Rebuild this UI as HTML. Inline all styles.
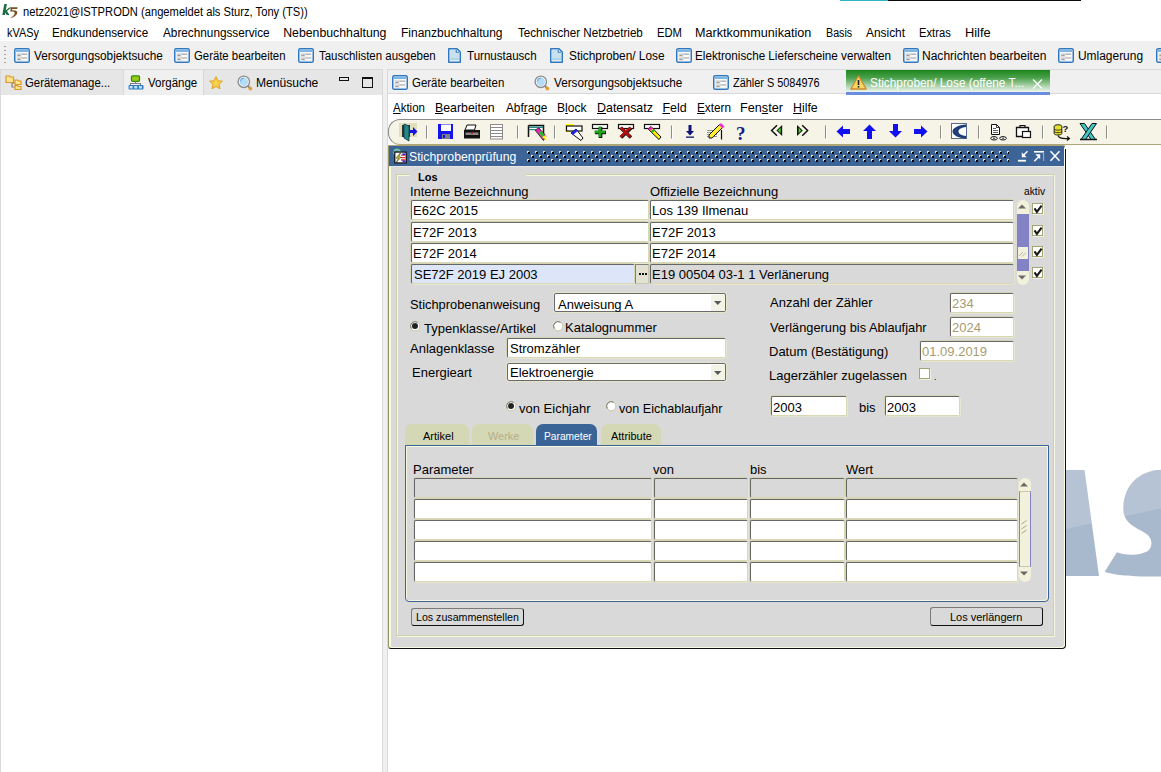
<!DOCTYPE html>
<html><head><meta charset="utf-8"><title>kVASy</title>
<style>
html,body{margin:0;padding:0;}
body{width:1161px;height:772px;overflow:hidden;position:relative;background:#fff;font-family:"Liberation Sans",sans-serif;}
.a{position:absolute;box-sizing:border-box;}
.t{position:absolute;white-space:pre;font-family:"Liberation Sans",sans-serif;}
svg{position:absolute;overflow:visible;}
.fld{position:absolute;box-sizing:border-box;background:#fff;border-top:1px solid #666;border-left:1px solid #666;border-right:1.5px solid #d8d8b4;border-bottom:1.5px solid #d8d8b4;box-shadow:-1px -1px 0 #d4d4b4, 1px 1px 0 #e6e6d2;border-radius:2px;}
.fld.g{background:#d9d9d9;}
.chk{position:absolute;box-sizing:border-box;width:11px;height:11px;background:#fff;border:1px solid #a4a474;box-shadow:1px 1px 0 #f0f0e6;}
.btn{position:absolute;box-sizing:border-box;background:#d9d9d9;border-top:1px solid #7a7a7a;border-left:1px solid #7a7a7a;border-right:1.5px solid #111;border-bottom:1.5px solid #111;border-radius:3px;}
.tab{position:absolute;box-sizing:border-box;background:#d5d8b5;border-radius:7px 7px 0 0;}
.dd{position:absolute;box-sizing:border-box;background:#fff;border:1px solid #6a6a6a;border-radius:2px;box-shadow:0 0 0 1px #e4e4c8;}
.ddb{position:absolute;right:0;top:1px;bottom:0;width:14px;background:#f4f4e6;}

</style></head><body>
<!-- top line -->
<div class="a" style="left:840px;top:0;width:48px;height:1px;background:#31b3c3"></div>
<div class="a" style="left:888px;top:0;width:193px;height:1px;background:#0a0a0a"></div>
<!-- k5 logo -->
<svg style="left:0;top:0" width="20" height="20">
 <path d="M4.3 4 H6.9 L4.9 15 H2.3 Z" fill="#1a6e42"/>
 <path d="M4.8 11 L9.4 7.6 H11.6 L7 11.1 L9.4 15 H6.8 L5 12.4 Z" fill="#1a6e42"/>
 <path d="M10.8 7.3 H17.6 L17.1 9 H12.4 L11.9 10.4 C14.8 10 17.6 10.6 17.2 13 C16.8 15.6 13.4 17.4 10.2 18.3 C12.6 16.6 14.6 15 14.6 13.2 C14.6 11.6 12.6 11.4 10.3 11.8 Z" fill="#7a5020"/>
</svg>

<!-- eclipse toolbar -->
<div class="a" style="left:0;top:41px;width:1161px;height:28px;background:#f0f0f0"></div>
<div class="a" style="left:4px;top:46px;width:2px;height:18px;background:repeating-linear-gradient(#a0a0a0 0 1px,transparent 1px 4px)"></div>

<!-- left panel -->
<div class="a" style="left:0;top:69px;width:383px;height:703px;background:#fff;border:1px solid #d9d9d9;border-bottom:none"></div>
<div class="a" style="left:0;top:69px;width:383px;height:26px;background:#e6e6e6;border:1px solid #d9d9d9;border-bottom:none"></div>
<div class="a" style="left:123px;top:70px;width:81px;height:25px;background:#f0f0f0;border-left:1px solid #d9d9d9;border-right:1px solid #d9d9d9"></div>
<!-- gap -->
<div class="a" style="left:383px;top:69px;width:4px;height:703px;background:#f0f0f0"></div>
<!-- right panel -->
<div class="a" style="left:387px;top:69px;width:774px;height:703px;background:#fff;border-left:1px solid #d9d9d9;border-top:1px solid #d9d9d9"></div>
<div class="a" style="left:388px;top:70px;width:773px;height:24px;background:#f0f0f0;border-bottom:1px solid #d9d9d9"></div>
<!-- green tab -->
<div class="a" style="left:846px;top:70px;width:204px;height:22px;background:linear-gradient(#1c871c 0%,#4aa04a 35%,#a8d0a8 70%,#eef6ee 100%)"></div>
<div class="a" style="left:846px;top:92px;width:204px;height:3px;background:#6b8de0"></div>

<!-- minimize / maximize -->
<div class="a" style="left:339px;top:77px;width:10px;height:4px;border:1px solid #111;border-top-width:1.5px"></div>
<div class="a" style="left:362px;top:77px;width:11px;height:11px;border:1px solid #111;border-top-width:2px"></div>

<!-- oracle toolbar -->
<div class="a" style="left:388px;top:119px;width:773px;height:26px;background:#f5f4e6;border-top:1px solid #8a8a8a;border-bottom:1px solid #aea676;border-radius:12px 0 0 12px;border-left:1px solid #8a8a8a"></div>

<!-- background logo -->
<svg style="left:0;top:0" width="1161" height="772">
  <defs><clipPath id="cl"><rect x="1066" y="0" width="95" height="772"/></clipPath></defs>
  <g clip-path="url(#cl)">
    <path d="M1040 470 L1084.5 470 L1099 576 L1040 576 Z" fill="#a8b8cd"/>
    <path d="M1161 469.7 C1145 470 1124 480 1123.3 508 C1123 523 1135 527 1145 533 C1152 537 1153.5 545 1148.5 550.5 C1142 555.5 1125 556 1116.9 552.3 L1104.7 571.7 C1115 575.5 1130 576.6 1161 576.6 Z" fill="#a8b8cd"/>
    <path d="M1040 440 L1161 440 L1161 508.6 L1040 534.5 Z" fill="#fff" opacity="0.16"/>
  </g>
</svg>

<!-- dialog -->
<div class="a" style="left:388px;top:145px;width:678px;height:504px;background:#d9d9d9;border-left:1px solid #949466;border-top:1px solid #aea676;border-right:1.5px solid #111;border-bottom:1.5px solid #111;border-radius:0 3px 4px 3px;box-shadow:inset 2px 0 0 #fbfbe6, inset -1px -1px 0 #fbfbe6"></div>
<div class="a" style="left:389px;top:146px;width:675px;height:20px;background:#3d6496"></div>
<svg style="left:526.5px;top:151px" width="482" height="11">
  <defs><pattern id="dots" x="0" y="0" width="8" height="8" patternUnits="userSpaceOnUse">
    <rect x="0" y="0" width="2" height="2" fill="#e6e6bc"/><rect x="1" y="1" width="2" height="2" fill="#000"/>
    <rect x="4" y="4" width="2" height="2" fill="#e6e6bc"/><rect x="5" y="5" width="2" height="2" fill="#000"/>
  </pattern></defs>
  <rect x="0" y="0" width="482" height="11" fill="url(#dots)"/>
</svg>
<div class="a" style="left:389px;top:166px;width:675px;height:1px;background:#e6e6e6"></div>
<!-- title buttons -->
<svg style="left:1016px;top:150px" width="48" height="14">
  <path d="M2 10.7 H10" stroke="#fff" stroke-width="1.8"/>
  <path d="M11.5 1.3 L7 5.8" stroke="#fff" stroke-width="1.5"/>
  <path d="M5.8 2.3 V7.2 H10.7 Z" fill="#fff"/>
  <path d="M18 1.8 H28" stroke="#fff" stroke-width="1.6"/>
  <path d="M27.6 2 V11" stroke="#b0aaa0" stroke-width="1.1"/>
  <path d="M18.3 11.3 L22.5 7" stroke="#fff" stroke-width="1.5"/>
  <path d="M24.2 4.3 H19.3 L24.2 9.2 Z" fill="#fff"/>
  <path d="M34.5 1.2 L43.5 10.8 M43.5 1.2 L34.5 10.8" stroke="#fff" stroke-width="1.6"/>
</svg>

<!-- group frame Los -->
<div class="a" style="left:397px;top:175px;width:658px;height:462px;border:1px solid #f6f6e2"></div>
<div class="a" style="left:396px;top:174px;width:658px;height:462px;border:1px solid #cbd1a8"></div>
<div class="a" style="left:410px;top:172px;width:115.5px;height:5px;background:#d9d9d9"></div>
<svg width="0" height="0" style="position:absolute">
<defs>
 <symbol id="ifrm" viewBox="0 0 16 15">
  <rect x="0.75" y="0.75" width="14.5" height="13.5" rx="1.6" fill="#fff" stroke="#2f78bd" stroke-width="1.5"/>
  <rect x="2" y="2.2" width="12" height="1.6" fill="#5aa3dc"/>
  <rect x="2.5" y="4.8" width="11" height="8" fill="#dedede"/>
  <rect x="3.5" y="6.8" width="3" height="1" fill="#8a8a8a"/>
  <rect x="3.5" y="10.8" width="3" height="1" fill="#8a8a8a"/>
  <rect x="7.5" y="5.8" width="5.5" height="3" fill="#fff"/><rect x="7.5" y="5.8" width="5.5" height="0.9" fill="#999"/>
  <rect x="7.5" y="9.6" width="5.5" height="3" fill="#fff"/><rect x="7.5" y="9.6" width="5.5" height="0.9" fill="#999"/>
 </symbol>
 <symbol id="idoc" viewBox="0 0 13 15">
  <path d="M0.75 0.75 H9 L12.25 4 V14.25 H0.75 Z" fill="#fff" stroke="#2f78bd" stroke-width="1.5" stroke-linejoin="round"/>
  <path d="M2 2 H8 V5 H11 V11.5 H2 Z" fill="#c9e1ee"/>
  <rect x="2" y="10" width="9" height="2.5" fill="#b4d4e6"/>
  <path d="M8.3 1.8 V4.3 H11" stroke="#2f78bd" stroke-width="1.1" fill="none"/>
 </symbol>
 <symbol id="istar" viewBox="0 0 14 14">
  <path d="M7 0.6 L8.9 4.8 L13.4 5.2 L10 8.2 L11 12.8 L7 10.4 L3 12.8 L4 8.2 L0.6 5.2 L5.1 4.8 Z" fill="#f7d04a" stroke="#e0a020" stroke-width="1" stroke-linejoin="round"/>
 </symbol>
 <symbol id="imag" viewBox="0 0 16 16">
  <path d="M10.8 10.8 L13.2 13.2" stroke="#8a8a8a" stroke-width="2.2"/>
  <circle cx="13.4" cy="13.6" r="1.9" fill="#e8a030"/>
  <circle cx="6.8" cy="6.8" r="5.7" fill="#fff" stroke="#8c8c8c" stroke-width="1.4"/>
  <circle cx="6.8" cy="6.8" r="4.3" fill="#b4dcf6"/>
  <path d="M3.5 6.5 A3.5 3.5 0 0 1 7 3" stroke="#5aa0e0" stroke-width="1" fill="none"/>
 </symbol>
 <symbol id="ifold" viewBox="0 0 17 15">
  <path d="M7 6 V12 H11 M7 8 H11" stroke="#808080" stroke-width="1.2" fill="none"/>
  <path d="M1 1 H4.5 L5.5 2 H8.5 V7.5 H1 Z" fill="#fbe590" stroke="#d9982c" stroke-width="1.2"/>
  <path d="M10 5 H12.5 L13.5 6 H16 V9.5 H10 Z" fill="#fbe590" stroke="#d9982c" stroke-width="1.2"/>
  <path d="M10 10.5 H12.5 L13.5 11.5 H16 V14.5 H10 Z" fill="#fbe590" stroke="#d9982c" stroke-width="1.2"/>
 </symbol>
 <symbol id="ivorg" viewBox="0 0 16 15">
  <rect x="3.5" y="0.8" width="8" height="5.5" rx="1" fill="#98cc18" stroke="#3a8a10" stroke-width="1.3"/>
  <path d="M7.5 6.5 V8.5 M2.5 10 V8.5 H12.5 V10" stroke="#808080" stroke-width="1.1" fill="none"/>
  <rect x="0.5" y="10" width="15" height="4.5" rx="1" fill="#2f7dc0"/>
  <rect x="1.6" y="11" width="3" height="2.5" fill="#bfe0fb"/><rect x="6.2" y="11" width="3" height="2.5" fill="#bfe0fb"/><rect x="10.9" y="11" width="3" height="2.5" fill="#bfe0fb"/>
 </symbol>
 <symbol id="iwarn" viewBox="0 0 17 15">
  <path d="M8.5 1 L16.2 14 H0.8 Z" fill="#f8d860" stroke="#d08a30" stroke-width="1.3" stroke-linejoin="round"/>
  <rect x="7.7" y="5" width="1.6" height="5" fill="#223"/><rect x="7.7" y="11" width="1.6" height="1.6" fill="#223"/>
 </symbol>
</defs>
</svg>
<!-- eclipse toolbar icons -->
<svg style="left:14px;top:48px" width="16" height="15"><use href="#ifrm"/></svg>
<svg style="left:174px;top:48px" width="16" height="15"><use href="#ifrm"/></svg>
<svg style="left:298px;top:48px" width="16" height="15"><use href="#ifrm"/></svg>
<svg style="left:448px;top:48px" width="13" height="15"><use href="#idoc"/></svg>
<svg style="left:550px;top:48px" width="13" height="15"><use href="#idoc"/></svg>
<svg style="left:676px;top:48px" width="16" height="15"><use href="#ifrm"/></svg>
<svg style="left:903px;top:48px" width="16" height="15"><use href="#ifrm"/></svg>
<svg style="left:1058px;top:48px" width="16" height="15"><use href="#ifrm"/></svg>
<svg style="left:1156px;top:48px" width="16" height="15"><use href="#ifrm"/></svg>
<!-- tab icons -->
<svg style="left:5px;top:75px" width="17" height="15"><use href="#ifold"/></svg>
<svg style="left:128px;top:75px" width="16" height="15"><use href="#ivorg"/></svg>
<svg style="left:209px;top:75.5px" width="14" height="14"><use href="#istar"/></svg>
<svg style="left:237px;top:74.5px" width="16" height="16"><use href="#imag"/></svg>
<svg style="left:392px;top:75px" width="16" height="15"><use href="#ifrm"/></svg>
<svg style="left:534px;top:75px" width="16" height="16"><use href="#imag"/></svg>
<svg style="left:713px;top:75px" width="16" height="15"><use href="#ifrm"/></svg>
<svg style="left:850px;top:75px" width="17" height="15"><use href="#iwarn"/></svg>
<svg style="left:1032px;top:79px" width="11" height="10"><path d="M1 0.5 L10 9.5 M10 0.5 L1 9.5" stroke="#fff" stroke-width="1.2"/></svg>
<!-- oracle toolbar icons -->
<svg style="left:0;top:0" width="1161" height="150">
 <g fill="none">
  <!-- separators -->
  <g stroke="#8c8c8c" stroke-width="1">
   <path d="M426.5 125.5V138.5M517.5 125.5V138.5M554.5 125.5V138.5M671.5 125.5V138.5M825.5 125.5V138.5M940.5 125.5V138.5M978.5 125.5V138.5M1042.5 125.5V138.5M1106.5 125.5V138.5"/>
  </g>
  <g stroke="#fff" stroke-width="1" opacity="0.9">
   <path d="M427.5 126V139M518.5 126V139M555.5 126V139M672.5 126V139M826.5 126V139M941.5 126V139M979.5 126V139M1043.5 126V139M1107.5 126V139"/>
  </g>
 </g>
 <!-- exit -->
 <rect x="399" y="123" width="18" height="14" fill="#d8d4a8" opacity="0.7"/>
 <path d="M402 125H410V137H402Z" fill="#333"/>
 <path d="M404 124 L409 126 V141 L404 138 Z" fill="#1e8a8a" stroke="#134" stroke-width="0.8"/>
 <path d="M410 130H413V127L417.5 131.5L413 136V133H410Z" fill="#1414e0"/>
 <!-- floppy -->
 <path d="M438 124H453V139H438Z" fill="#1515f0"/>
 <rect x="441" y="124.5" width="10" height="6.5" fill="#fff"/>
 <rect x="442" y="134" width="8" height="5" fill="#808080"/><rect x="443" y="135" width="2" height="3" fill="#1515f0"/>
 <!-- printer -->
 <path d="M467 125H476L474.5 130H465Z" fill="#fff" stroke="#111" stroke-width="1"/>
 <path d="M464 130H480V138.5H464Z" fill="#111"/>
 <rect x="465.5" y="132.5" width="13" height="2.5" fill="#888"/><rect x="471" y="132.5" width="2" height="1.2" fill="#e00"/>
 <!-- list -->
 <rect x="490.5" y="124.5" width="12" height="14.5" fill="#fff" stroke="#8a8a8a" stroke-width="1"/>
 <path d="M490.5 127.5H502.5M490.5 130.5H502.5M490.5 133.5H502.5M490.5 136.5H502.5" stroke="#8a8a8a" stroke-width="1"/>
 <!-- icon 528 -->
 <path d="M528.5 125.5H543.5V137M528.5 125.5V137" stroke="#111" stroke-width="1.5" fill="#fff"/>
 <rect x="529" y="126.5" width="14" height="1.5" fill="#2a8a8a"/><rect x="529" y="129" width="6" height="1.2" fill="#2a8a8a"/>
 <path d="M535 130L539 128L546 136L543.5 140.5Z" fill="#f020c0" stroke="#111" stroke-width="0.8"/>
 <path d="M538.5 132.5L541.5 131L544.5 135L542 137Z" fill="#20c020"/>
 <path d="M542 137L546 135L546.5 140.5Z" fill="#ff0"/>
 <!-- icon 565 -->
 <rect x="565" y="124" width="9" height="8" fill="#ffff00"/>
 <rect x="566.5" y="126" width="15.5" height="5" fill="#fff" stroke="#111" stroke-width="1.2"/>
 <path d="M571 133L576 129L583 138L581 140.5Z" fill="#fff" stroke="#111" stroke-width="1"/>
 <path d="M571 133L576 129L577.5 131L573 135Z" fill="#2020f0"/>
 <!-- plus -->
 <rect x="592.5" y="124.5" width="15" height="4" fill="#fff" stroke="#111" stroke-width="1.2"/>
 <path d="M600.5 127V138M595 132.5H606" stroke="#111" stroke-width="3.6"/>
 <path d="M600 126.5V137M594.5 132H605" stroke="#18a818" stroke-width="2.6"/>
 <!-- X -->
 <rect x="618.5" y="124.5" width="15" height="4" fill="#fff" stroke="#111" stroke-width="1.2"/>
 <path d="M621 128L631 137.5M631 128L621 137.5" stroke="#111" stroke-width="3.5"/>
 <path d="M620.5 127.5L630.5 137M630.5 127.5L620.5 137" stroke="#b01010" stroke-width="2.6"/>
 <!-- pencil -->
 <rect x="644.5" y="124.5" width="15" height="4" fill="#fff" stroke="#111" stroke-width="1.2"/>
 <path d="M648 129L651 126.5L661 137L659 139.5Z" fill="#ffee00" stroke="#111" stroke-width="1"/>
 <path d="M648 129L651 126.5L653 128.5L650 131Z" fill="#f020c0"/><path d="M650.5 131.5L653.5 129L655 130.5L652 133Z" fill="#20b020"/>
 <!-- download -->
 <path d="M688.5 125V131H686L690 135.5L694 131H691.5V125Z" fill="#12127a"/><rect x="686" y="136.5" width="8" height="1.3" fill="#12127a"/>
 <!-- pen doc -->
 <path d="M707 130.5H717M707 132.5H717M707 134.5H717M707 136.5H717" stroke="#888" stroke-width="0.9"/>
 <path d="M721.5 130V139.5" stroke="#111" stroke-width="1.2"/>
 <path d="M709 135L719.5 124.5L722.5 127.5L712 138H709Z" fill="#ffee33" stroke="#111" stroke-width="1"/>
 <path d="M719 125L721 123L724.5 126.5L722.5 128.5Z" fill="#f030d0"/>
 <!-- ? -->
 <text x="736" y="139.5" font-family="Liberation Serif" font-weight="bold" font-size="19" fill="#1a1a8a">?</text>
 <!-- << >> -->
 <path d="M777 125.3 L771.6 130.5 L777 135.7" stroke="#111" stroke-width="1.5" fill="none"/>
 <path d="M782.2 125 V136 L776.4 130.5 Z" fill="#111"/>
 <path d="M780.6 127.6 V133.4 L777.9 130.5 Z" fill="#44dd22"/>
 <path d="M802.2 125.3 L807.6 130.5 L802.2 135.7" stroke="#111" stroke-width="1.5" fill="none"/>
 <path d="M797 125 V136 L802.8 130.5 Z" fill="#111"/>
 <path d="M798.6 127.6 V133.4 L801.3 130.5 Z" fill="#44dd22"/>
 <!-- arrows -->
 <path d="M836.5 131.5L843 125.5V129H850V134H843V137.5Z" fill="#1010f0"/>
 <path d="M869.5 124.5L876 131H872V139H867V131H863Z" fill="#1010f0"/>
 <path d="M895.5 137.5L902 131H898V124H893V131H889Z" fill="#1010f0"/>
 <path d="M927.5 131.5L921 125.5V129H914V134H921V137.5Z" fill="#1010f0"/>
 <!-- C icon -->
 <rect x="951" y="123" width="16" height="16" fill="#c8c8c8"/>
 <rect x="951.5" y="123.5" width="15" height="15" fill="#fff" stroke="#5a6a8a" stroke-width="1"/>
 <path d="M966 124.5C958 125 952.5 128 952.5 131.5C952.5 135 958 138 966 138.5V136C962 135.5 958.5 134 958.5 131.5C958.5 129 962 127.5 966 127Z" fill="#1e3e78"/>
 <!-- doc glasses -->
 <path d="M991.5 124.5H996.5L999.5 127.5V134.5H991.5Z" fill="#fff" stroke="#111" stroke-width="1"/>
 <path d="M996.5 124.5V127.5H999.5" stroke="#111" stroke-width="0.8" fill="none"/>
 <path d="M993 128.5H996M993 130.5H998M993 132.5H998" stroke="#222" stroke-width="0.7"/>
 <ellipse cx="994" cy="138.3" rx="3.3" ry="1.7" fill="#fff" stroke="#111" stroke-width="1"/>
 <ellipse cx="1003" cy="138.3" rx="3.3" ry="1.7" fill="#fff" stroke="#111" stroke-width="1"/>
 <circle cx="994" cy="138.3" r="0.8" fill="#111"/><circle cx="1003" cy="138.3" r="0.8" fill="#111"/>
 <!-- clipboard -->
 <path d="M1016.5 127.5H1028.5V136.5H1016.5Z" fill="#fff" stroke="#111" stroke-width="1.3"/>
 <path d="M1020 127.5V125.5H1025V127.5" stroke="#111" stroke-width="1.2" fill="none"/>
 <rect x="1022.5" y="131.5" width="8" height="6" fill="#fff" stroke="#111" stroke-width="1.2"/>
 <!-- db -->
 <ellipse cx="1058" cy="126.5" rx="3.8" ry="1.8" fill="#e8e030" stroke="#111" stroke-width="0.9"/>
 <path d="M1054.2 126.5V133.5C1054.2 135.5 1061.8 135.5 1061.8 133.5V126.5" fill="#e8e030" stroke="#111" stroke-width="0.9"/>
 <path d="M1054.2 129C1054.2 130.5 1061.8 130.5 1061.8 129M1054.2 131.5C1054.2 133 1061.8 133 1061.8 131.5" stroke="#111" stroke-width="0.8" fill="none"/>
 <text x="1062.5" y="131.5" font-family="Liberation Sans" font-weight="bold" font-size="9.5" fill="#111">?</text>
 <path d="M1058 135.5C1059 138.5 1063 139 1069 138.5M1067 136.5L1069.5 138.5L1067 140.5" stroke="#111" stroke-width="1.1" fill="none"/>
 <!-- X excel -->
 <path d="M1080 123.5H1084.5L1095.5 139.5H1091Z" fill="#40c8c8" stroke="#111" stroke-width="1"/>
 <path d="M1096.5 123.5H1092L1081 139.5H1085.5Z" fill="#40c8c8" stroke="#111" stroke-width="1"/>
 <path d="M1080 139.5H1097" stroke="#111" stroke-width="1.5"/>
</svg>
<!-- dialog title icon -->
<svg style="left:391px;top:147px" width="17" height="18">
 <circle cx="6" cy="5.5" r="4.2" fill="#4a9a78"/>
 <path d="M3 3.5 Q6 1.5 9 3.5 M2.5 6 H9.5" stroke="#b8d8f0" stroke-width="0.8" fill="none"/>
 <rect x="3.2" y="4.5" width="12.6" height="12" fill="#111"/>
 <rect x="4.4" y="5.7" width="10.2" height="9.6" fill="#fff"/>
 <path d="M10 8.2H14.2M10 10.6H14.2M10 13H14.2" stroke="#e02828" stroke-width="1.3"/>
 <rect x="11.5" y="6.3" width="3" height="1.8" fill="#2a2ad8"/><rect x="11.5" y="13.5" width="3" height="1.6" fill="#2a2ad8"/>
 <path d="M9.3 5.8 L5 11.2 H7.6 L4.8 16 L10.2 10 H7.6 L9.8 5.8 Z" fill="#f4e400" stroke="#333" stroke-width="0.6"/>
</svg>

<div class="fld" style="left:410.5px;top:199.5px;width:238.5px;height:20.0px;background:#fff"></div><div class="fld" style="left:650px;top:199.5px;width:364px;height:20.0px;background:#fff"></div><div class="fld" style="left:410.5px;top:221.5px;width:238.5px;height:20.0px;background:#fff"></div><div class="fld" style="left:650px;top:221.5px;width:364px;height:20.0px;background:#fff"></div><div class="fld" style="left:410.5px;top:242.5px;width:238.5px;height:20.0px;background:#fff"></div><div class="fld" style="left:650px;top:242.5px;width:364px;height:20.0px;background:#fff"></div><div class="fld" style="left:410.5px;top:263.5px;width:224.0px;height:20.0px;background:#dce6f8"></div><div class="fld" style="left:650px;top:263.5px;width:364px;height:20.0px;background:#d9d9d9"></div><div class="a" style="left:635px;top:264px;width:14px;height:20px;background:#e2e2d2;border-top:1px solid #808080;border-left:1px solid #808080;border-right:1px solid #c8c8b0;border-bottom:1px solid #c8c8b0"></div><div class="a" style="left:638.5px;top:273px;width:2px;height:2px;background:#111;box-shadow:3px 0 0 #111,6px 0 0 #111"></div><div class="chk" style="left:1032px;top:203px"><svg style="left:0;top:0" width="9" height="9"><path d="M1.5 4.3 L3.9 7.9 L8.6 1.6" stroke="#1a1a1a" stroke-width="2.1" fill="none"/></svg></div><div class="a" style="left:1046px;top:213px;width:1.5px;height:1.5px;background:#e0e0a8"></div><div class="chk" style="left:1032px;top:225px"><svg style="left:0;top:0" width="9" height="9"><path d="M1.5 4.3 L3.9 7.9 L8.6 1.6" stroke="#1a1a1a" stroke-width="2.1" fill="none"/></svg></div><div class="a" style="left:1046px;top:235px;width:1.5px;height:1.5px;background:#e0e0a8"></div><div class="chk" style="left:1032px;top:246px"><svg style="left:0;top:0" width="9" height="9"><path d="M1.5 4.3 L3.9 7.9 L8.6 1.6" stroke="#1a1a1a" stroke-width="2.1" fill="none"/></svg></div><div class="a" style="left:1046px;top:256px;width:1.5px;height:1.5px;background:#e0e0a8"></div><div class="chk" style="left:1032px;top:267px"><svg style="left:0;top:0" width="9" height="9"><path d="M1.5 4.3 L3.9 7.9 L8.6 1.6" stroke="#1a1a1a" stroke-width="2.1" fill="none"/></svg></div><div class="a" style="left:1046px;top:277px;width:1.5px;height:1.5px;background:#e0e0a8"></div><div class="a" style="left:1016.5px;top:200px;width:12px;height:85px;background:#f2f2dc;border-radius:6px"></div><div class="a" style="left:1016.5px;top:213.5px;width:12.0px;height:57.5px;background:#8282c4"></div><div class="a" style="left:1017.5px;top:247px;width:10.0px;height:11.5px;background:#f2f2dc"></div><svg style="left:1018px;top:250px" width="9" height="7"><path d="M1 6 L5 2 M4 6.5 L8 2.5" stroke="#a8a890" stroke-width="0.8"/></svg><div class="a" style="left:1064.5px;top:145px;width:2.0px;height:3.5px;background:#fff"></div><svg style="left:1018px;top:204px" width="9" height="5"><path d="M0 4.5H8L4 0.5Z" fill="#6a6a6a"/></svg><svg style="left:1018px;top:274.5px" width="9" height="5"><path d="M0 0.5H8L4 4.5Z" fill="#6a6a6a"/></svg><div class="dd" style="left:554px;top:293px;width:172px;height:19px"><div class="ddb"></div><svg style="right:3px;top:7px" width="8" height="5"><path d="M0 0H7.5L3.75 4Z" fill="#585858"/></svg></div><div class="fld" style="left:506.5px;top:337.5px;width:219.5px;height:20.0px;background:#fff"></div><div class="dd" style="left:507px;top:362.5px;width:219px;height:18.5px"><div class="ddb"></div><svg style="right:3px;top:7px" width="8" height="5"><path d="M0 0H7.5L3.75 4Z" fill="#585858"/></svg></div><div class="fld" style="left:949.5px;top:292.5px;width:64.5px;height:20.0px;background:#fff"></div><div class="fld" style="left:949.5px;top:316.5px;width:64.5px;height:20.0px;background:#fff"></div><div class="fld" style="left:919.5px;top:340.5px;width:94.5px;height:20.0px;background:#fff"></div><div class="chk" style="left:919px;top:368px"></div><svg style="left:410px;top:321px" width="11" height="11"><circle cx="5.25" cy="5.25" r="4.6" fill="#fff" stroke="#c8c8a8" stroke-width="1"/><path d="M1.3 7.5 A4.5 4.5 0 0 1 7.5 1.3" stroke="#7a7a6a" stroke-width="1" fill="none"/><circle cx="5" cy="5" r="3" fill="#222"/></svg><svg style="left:553px;top:321px" width="11" height="11"><circle cx="5.25" cy="5.25" r="4.6" fill="#fff" stroke="#c8c8a8" stroke-width="1"/><path d="M1.3 7.5 A4.5 4.5 0 0 1 7.5 1.3" stroke="#7a7a6a" stroke-width="1" fill="none"/></svg><svg style="left:506px;top:401px" width="11" height="11"><circle cx="5.25" cy="5.25" r="4.6" fill="#fff" stroke="#c8c8a8" stroke-width="1"/><path d="M1.3 7.5 A4.5 4.5 0 0 1 7.5 1.3" stroke="#7a7a6a" stroke-width="1" fill="none"/><circle cx="5" cy="5" r="3" fill="#222"/></svg><svg style="left:605.5px;top:401px" width="11" height="11"><circle cx="5.25" cy="5.25" r="4.6" fill="#fff" stroke="#c8c8a8" stroke-width="1"/><path d="M1.3 7.5 A4.5 4.5 0 0 1 7.5 1.3" stroke="#7a7a6a" stroke-width="1" fill="none"/></svg><div class="fld" style="left:770.5px;top:395.5px;width:76.0px;height:20.0px;background:#fff"></div><div class="fld" style="left:884.5px;top:395.5px;width:75.5px;height:20.0px;background:#fff"></div><div class="tab" style="left:405px;top:424px;width:64px;height:22px"></div><div class="tab" style="left:472px;top:424px;width:61px;height:22px"></div><div class="tab" style="left:536px;top:424px;width:61px;height:22px;background:#3b6496"></div><div class="tab" style="left:600.5px;top:424px;width:60.5px;height:22px"></div><div class="a" style="left:405px;top:445px;width:644px;height:156.5px;border:1px solid #3b6496;border-radius:0 0 4px 4px;box-shadow:inset 1px 1px 0 #f8f8e0, inset -1px -1px 0 #f8f8e0"></div><div class="fld" style="left:413.5px;top:477.5px;width:238.5px;height:20.0px;background:#d9d9d9"></div><div class="fld" style="left:653.5px;top:477.5px;width:94.5px;height:20.0px;background:#d9d9d9"></div><div class="fld" style="left:749.5px;top:477.5px;width:95.0px;height:20.0px;background:#d9d9d9"></div><div class="fld" style="left:845.5px;top:477.5px;width:172.0px;height:20.0px;background:#d9d9d9"></div><div class="fld" style="left:413.5px;top:498.5px;width:238.5px;height:20.0px;background:#fff"></div><div class="fld" style="left:653.5px;top:498.5px;width:94.5px;height:20.0px;background:#fff"></div><div class="fld" style="left:749.5px;top:498.5px;width:95.0px;height:20.0px;background:#fff"></div><div class="fld" style="left:845.5px;top:498.5px;width:172.0px;height:20.0px;background:#fff"></div><div class="fld" style="left:413.5px;top:519.5px;width:238.5px;height:20.0px;background:#fff"></div><div class="fld" style="left:653.5px;top:519.5px;width:94.5px;height:20.0px;background:#fff"></div><div class="fld" style="left:749.5px;top:519.5px;width:95.0px;height:20.0px;background:#fff"></div><div class="fld" style="left:845.5px;top:519.5px;width:172.0px;height:20.0px;background:#fff"></div><div class="fld" style="left:413.5px;top:540.5px;width:238.5px;height:20.0px;background:#fff"></div><div class="fld" style="left:653.5px;top:540.5px;width:94.5px;height:20.0px;background:#fff"></div><div class="fld" style="left:749.5px;top:540.5px;width:95.0px;height:20.0px;background:#fff"></div><div class="fld" style="left:845.5px;top:540.5px;width:172.0px;height:20.0px;background:#fff"></div><div class="fld" style="left:413.5px;top:561.5px;width:238.5px;height:20.0px;background:#fff"></div><div class="fld" style="left:653.5px;top:561.5px;width:94.5px;height:20.0px;background:#fff"></div><div class="fld" style="left:749.5px;top:561.5px;width:95.0px;height:20.0px;background:#fff"></div><div class="fld" style="left:845.5px;top:561.5px;width:172.0px;height:20.0px;background:#fff"></div><div class="a" style="left:1018.5px;top:478px;width:12px;height:104px;background:#f2f2dc;border-radius:6px"></div><div class="a" style="left:1018.5px;top:491px;width:12.0px;height:76px;background:#f2f2dc;border-left:1px solid #8282c4;border-right:1px solid #8282c4;border-top:1px solid #c8c8b0;border-bottom:1px solid #c8c8b0"></div><svg style="left:1020px;top:482px" width="9" height="5"><path d="M0 4.5H8L4 0.5Z" fill="#6a6a6a"/></svg><svg style="left:1020px;top:571px" width="9" height="5"><path d="M0 0.5H8L4 4.5Z" fill="#6a6a6a"/></svg><svg style="left:1021px;top:520px" width="7" height="14"><path d="M0.5 4L5.5 0.5M0.5 9L5.5 5.5M0.5 13.5L5.5 10" stroke="#a8a890" stroke-width="1"/></svg><div class="btn" style="left:411px;top:607.5px;width:113px;height:18.5px"></div><div class="btn" style="left:930px;top:607px;width:113px;height:19px"></div>
<div class="t" style="left:23.40px;top:6.01px;font-size:12.3px;line-height:12.3px;color:#000;transform:scaleX(0.9077);transform-origin:0 0;">netz2021@ISTPRODN (angemeldet als Sturz, Tony (TS))</div><div class="t" style="left:6.90px;top:27.01px;font-size:12.3px;line-height:12.3px;color:#000;transform:scaleX(0.8876);transform-origin:0 0;">kVASy</div><div class="t" style="left:52.45px;top:27.01px;font-size:12.3px;line-height:12.3px;color:#000;transform:scaleX(0.9508);transform-origin:0 0;">Endkundenservice</div><div class="t" style="left:163.00px;top:27.01px;font-size:12.3px;line-height:12.3px;color:#000;transform:scaleX(0.9572);transform-origin:0 0;">Abrechnungsservice</div><div class="t" style="left:283.20px;top:27.01px;font-size:12.3px;line-height:12.3px;color:#000;">Nebenbuchhaltung</div><div class="t" style="left:401.02px;top:27.01px;font-size:12.3px;line-height:12.3px;color:#000;transform:scaleX(0.9769);transform-origin:0 0;">Finanzbuchhaltung</div><div class="t" style="left:518.20px;top:27.01px;font-size:12.3px;line-height:12.3px;color:#000;transform:scaleX(0.9464);transform-origin:0 0;">Technischer Netzbetrieb</div><div class="t" style="left:657.09px;top:27.01px;font-size:12.3px;line-height:12.3px;color:#000;transform:scaleX(0.9125);transform-origin:0 0;">EDM</div><div class="t" style="left:695.18px;top:27.01px;font-size:12.3px;line-height:12.3px;color:#000;transform:scaleX(1.0249);transform-origin:0 0;">Marktkommunikation</div><div class="t" style="left:825.93px;top:27.01px;font-size:12.3px;line-height:12.3px;color:#000;transform:scaleX(0.8713);transform-origin:0 0;">Basis</div><div class="t" style="left:866.40px;top:27.01px;font-size:12.3px;line-height:12.3px;color:#000;transform:scaleX(0.9680);transform-origin:0 0;">Ansicht</div><div class="t" style="left:919.19px;top:27.01px;font-size:12.3px;line-height:12.3px;color:#000;transform:scaleX(0.9110);transform-origin:0 0;">Extras</div><div class="t" style="left:964.56px;top:27.01px;font-size:12.3px;line-height:12.3px;color:#000;transform:scaleX(1.0437);transform-origin:0 0;">Hilfe</div><div class="t" style="left:34.00px;top:50.01px;font-size:12.3px;line-height:12.3px;color:#000;transform:scaleX(0.9567);transform-origin:0 0;">Versorgungsobjektsuche</div><div class="t" style="left:194.40px;top:50.01px;font-size:12.3px;line-height:12.3px;color:#000;transform:scaleX(0.9226);transform-origin:0 0;">Geräte bearbeiten</div><div class="t" style="left:318.80px;top:50.01px;font-size:12.3px;line-height:12.3px;color:#000;transform:scaleX(0.9324);transform-origin:0 0;">Tauschlisten ausgeben</div><div class="t" style="left:467.30px;top:50.01px;font-size:12.3px;line-height:12.3px;color:#000;transform:scaleX(0.9393);transform-origin:0 0;">Turnustausch</div><div class="t" style="left:569.00px;top:50.01px;font-size:12.3px;line-height:12.3px;color:#000;transform:scaleX(0.9639);transform-origin:0 0;">Stichproben/ Lose</div><div class="t" style="left:695.25px;top:50.01px;font-size:12.3px;line-height:12.3px;color:#000;transform:scaleX(0.9500);transform-origin:0 0;">Elektronische Lieferscheine verwalten</div><div class="t" style="left:922.02px;top:50.01px;font-size:12.3px;line-height:12.3px;color:#000;transform:scaleX(0.9778);transform-origin:0 0;">Nachrichten bearbeiten</div><div class="t" style="left:1078.00px;top:50.01px;font-size:12.3px;line-height:12.3px;color:#000;transform:scaleX(0.9710);transform-origin:0 0;">Umlagerung</div><div class="t" style="left:24.80px;top:77.01px;font-size:12.3px;line-height:12.3px;color:#000;transform:scaleX(0.9231);transform-origin:0 0;">Gerätemanage...</div><div class="t" style="left:148.00px;top:77.01px;font-size:12.3px;line-height:12.3px;color:#000;transform:scaleX(0.9354);transform-origin:0 0;">Vorgänge</div><div class="t" style="left:256.12px;top:77.01px;font-size:12.3px;line-height:12.3px;color:#000;transform:scaleX(0.9803);transform-origin:0 0;">Menüsuche</div><div class="t" style="left:411.50px;top:77.01px;font-size:12.3px;line-height:12.3px;color:#000;transform:scaleX(0.9306);transform-origin:0 0;">Geräte bearbeiten</div><div class="t" style="left:553.50px;top:77.01px;font-size:12.3px;line-height:12.3px;color:#000;transform:scaleX(0.9530);transform-origin:0 0;">Versorgungsobjektsuche</div><div class="t" style="left:732.70px;top:77.01px;font-size:12.3px;line-height:12.3px;color:#000;transform:scaleX(0.8864);transform-origin:0 0;">Zähler S 5084976</div><div class="t" style="left:869.70px;top:77.01px;font-size:12.3px;line-height:12.3px;color:#fff;transform:scaleX(0.9631);transform-origin:0 0;">Stichproben/ Lose (offene T...</div><div class="t" style="left:393.30px;top:102.00px;font-size:12.46px;line-height:12.46px;color:#000;transform:scaleX(0.9226);transform-origin:0 0;"><u>A</u>ktion</div><div class="t" style="left:435.31px;top:102.00px;font-size:12.46px;line-height:12.46px;color:#000;transform:scaleX(0.9897);transform-origin:0 0;"><u>B</u>earbeiten</div><div class="t" style="left:505.90px;top:102.00px;font-size:12.46px;line-height:12.46px;color:#000;transform:scaleX(0.9476);transform-origin:0 0;">Abf<u>r</u>age</div><div class="t" style="left:557.23px;top:102.00px;font-size:12.46px;line-height:12.46px;color:#000;transform:scaleX(0.9727);transform-origin:0 0;">B<u>l</u>ock</div><div class="t" style="left:597.30px;top:102.00px;font-size:12.46px;line-height:12.46px;color:#000;transform:scaleX(0.9974);transform-origin:0 0;"><u>D</u>atensatz</div><div class="t" style="left:662.40px;top:102.00px;font-size:12.46px;line-height:12.46px;color:#000;"><u>F</u>eld</div><div class="t" style="left:696.56px;top:102.00px;font-size:12.46px;line-height:12.46px;color:#000;transform:scaleX(0.9440);transform-origin:0 0;"><u>E</u>xtern</div><div class="t" style="left:739.88px;top:102.00px;font-size:12.46px;line-height:12.46px;color:#000;transform:scaleX(1.0178);transform-origin:0 0;">Fen<u>s</u>ter</div><div class="t" style="left:792.61px;top:102.00px;font-size:12.46px;line-height:12.46px;color:#000;transform:scaleX(0.9922);transform-origin:0 0;"><u>H</u>ilfe</div><div class="t" style="left:409.30px;top:150.51px;font-size:12.77px;line-height:12.77px;color:#fff;transform:scaleX(0.9638);transform-origin:0 0;">Stichprobenprüfung</div><div class="t" style="left:417.60px;top:171.81px;font-size:11.42px;line-height:11.42px;color:#000;font-weight:bold;transform:scaleX(0.9630);transform-origin:0 0;">Los</div><div class="t" style="left:409.54px;top:184.80px;font-size:13.5px;line-height:13.5px;color:#000;transform:scaleX(0.9572);transform-origin:0 0;">Interne Bezeichnung</div><div class="t" style="left:650.30px;top:184.61px;font-size:13.5px;line-height:13.5px;color:#000;transform:scaleX(0.9607);transform-origin:0 0;">Offizielle Bezeichnung</div><div class="t" style="left:1024.20px;top:186.40px;font-size:11.42px;line-height:11.42px;color:#000;transform:scaleX(0.8968);transform-origin:0 0;">aktiv</div><div class="t" style="left:412.54px;top:203.71px;font-size:13.5px;line-height:13.5px;color:#000;transform:scaleX(0.9630);transform-origin:0 0;">E62C 2015</div><div class="t" style="left:652.14px;top:203.71px;font-size:13.5px;line-height:13.5px;color:#000;transform:scaleX(0.9630);transform-origin:0 0;">Los 139 Ilmenau</div><div class="t" style="left:412.54px;top:225.61px;font-size:13.5px;line-height:13.5px;color:#000;transform:scaleX(0.9630);transform-origin:0 0;">E72F 2013</div><div class="t" style="left:652.14px;top:225.61px;font-size:13.5px;line-height:13.5px;color:#000;transform:scaleX(0.9630);transform-origin:0 0;">E72F 2013</div><div class="t" style="left:412.54px;top:246.61px;font-size:13.5px;line-height:13.5px;color:#000;transform:scaleX(0.9630);transform-origin:0 0;">E72F 2014</div><div class="t" style="left:652.14px;top:246.61px;font-size:13.5px;line-height:13.5px;color:#000;transform:scaleX(0.9630);transform-origin:0 0;">E72F 2014</div><div class="t" style="left:413.50px;top:267.61px;font-size:13.5px;line-height:13.5px;color:#000;transform:scaleX(0.9630);transform-origin:0 0;">SE72F 2019 EJ 2003</div><div class="t" style="left:652.14px;top:267.61px;font-size:13.5px;line-height:13.5px;color:#000;transform:scaleX(0.9630);transform-origin:0 0;">E19 00504 03-1 1 Verlänerung</div><div class="t" style="left:410.30px;top:298.11px;font-size:13.5px;line-height:13.5px;color:#000;transform:scaleX(0.9523);transform-origin:0 0;">Stichprobenanweisung</div><div class="t" style="left:558.00px;top:297.50px;font-size:13.5px;line-height:13.5px;color:#000;transform:scaleX(0.9630);transform-origin:0 0;">Anweisung A</div><div class="t" style="left:423.60px;top:321.50px;font-size:13.5px;line-height:13.5px;color:#000;transform:scaleX(0.9630);transform-origin:0 0;">Typenklasse/Artikel</div><div class="t" style="left:565.04px;top:321.41px;font-size:13.5px;line-height:13.5px;color:#000;transform:scaleX(0.9630);transform-origin:0 0;">Katalognummer</div><div class="t" style="left:410.30px;top:341.50px;font-size:13.5px;line-height:13.5px;color:#000;transform:scaleX(0.9630);transform-origin:0 0;">Anlagenklasse</div><div class="t" style="left:510.00px;top:341.50px;font-size:13.5px;line-height:13.5px;color:#000;transform:scaleX(0.9630);transform-origin:0 0;">Stromzähler</div><div class="t" style="left:412.44px;top:366.30px;font-size:13.5px;line-height:13.5px;color:#000;transform:scaleX(0.9630);transform-origin:0 0;">Energieart</div><div class="t" style="left:509.54px;top:366.30px;font-size:13.5px;line-height:13.5px;color:#000;transform:scaleX(0.9630);transform-origin:0 0;">Elektroenergie</div><div class="t" style="left:770.30px;top:296.41px;font-size:13.5px;line-height:13.5px;color:#000;transform:scaleX(0.9630);transform-origin:0 0;">Anzahl der Zähler</div><div class="t" style="left:770.30px;top:320.50px;font-size:13.5px;line-height:13.5px;color:#000;transform:scaleX(0.9479);transform-origin:0 0;">Verlängerung bis Ablaufjahr</div><div class="t" style="left:769.34px;top:344.61px;font-size:13.5px;line-height:13.5px;color:#000;transform:scaleX(0.9630);transform-origin:0 0;">Datum (Bestätigung)</div><div class="t" style="left:769.34px;top:368.71px;font-size:13.5px;line-height:13.5px;color:#000;transform:scaleX(0.9630);transform-origin:0 0;">Lagerzähler zugelassen</div><div class="t" style="left:952.00px;top:296.50px;font-size:13.5px;line-height:13.5px;color:#a69d72;transform:scaleX(0.9630);transform-origin:0 0;">234</div><div class="t" style="left:952.00px;top:320.50px;font-size:13.5px;line-height:13.5px;color:#a69d72;transform:scaleX(0.9630);transform-origin:0 0;">2024</div><div class="t" style="left:922.00px;top:344.61px;font-size:13.5px;line-height:13.5px;color:#a69d72;transform:scaleX(0.9630);transform-origin:0 0;">01.09.2019</div><div class="t" style="left:934.00px;top:373.00px;font-size:9.0px;line-height:9.0px;color:#000;">.</div><div class="t" style="left:519.00px;top:401.91px;font-size:13.5px;line-height:13.5px;color:#000;transform:scaleX(0.9630);transform-origin:0 0;">von Eichjahr</div><div class="t" style="left:618.80px;top:401.91px;font-size:13.5px;line-height:13.5px;color:#000;transform:scaleX(0.9321);transform-origin:0 0;">von Eichablaufjahr</div><div class="t" style="left:773.00px;top:400.50px;font-size:13.5px;line-height:13.5px;color:#000;transform:scaleX(0.9630);transform-origin:0 0;">2003</div><div class="t" style="left:858.50px;top:400.50px;font-size:13.5px;line-height:13.5px;color:#000;transform:scaleX(0.9630);transform-origin:0 0;">bis</div><div class="t" style="left:887.00px;top:400.50px;font-size:13.5px;line-height:13.5px;color:#000;transform:scaleX(0.9630);transform-origin:0 0;">2003</div><div class="t" style="left:422.90px;top:431.01px;font-size:11.42px;line-height:11.42px;color:#000;transform:scaleX(0.9661);transform-origin:0 0;">Artikel</div><div class="t" style="left:488.00px;top:431.01px;font-size:11.42px;line-height:11.42px;color:#b4ae88;transform:scaleX(0.9567);transform-origin:0 0;">Werke</div><div class="t" style="left:543.50px;top:431.01px;font-size:11.42px;line-height:11.42px;color:#fff;transform:scaleX(0.8961);transform-origin:0 0;">Parameter</div><div class="t" style="left:611.00px;top:431.01px;font-size:11.42px;line-height:11.42px;color:#000;transform:scaleX(0.9612);transform-origin:0 0;">Attribute</div><div class="t" style="left:412.54px;top:462.50px;font-size:13.5px;line-height:13.5px;color:#000;transform:scaleX(0.9630);transform-origin:0 0;">Parameter</div><div class="t" style="left:652.70px;top:463.00px;font-size:13.5px;line-height:13.5px;color:#000;transform:scaleX(0.9630);transform-origin:0 0;">von</div><div class="t" style="left:749.50px;top:463.00px;font-size:13.5px;line-height:13.5px;color:#000;transform:scaleX(0.9630);transform-origin:0 0;">bis</div><div class="t" style="left:845.60px;top:463.00px;font-size:13.5px;line-height:13.5px;color:#000;transform:scaleX(0.9630);transform-origin:0 0;">Wert</div><div class="t" style="left:415.50px;top:611.51px;font-size:11.42px;line-height:11.42px;color:#000;transform:scaleX(0.9321);transform-origin:0 0;">Los zusammenstellen</div><div class="t" style="left:950.00px;top:611.71px;font-size:11.42px;line-height:11.42px;color:#000;transform:scaleX(0.9586);transform-origin:0 0;">Los verlängern</div>
</body></html>
